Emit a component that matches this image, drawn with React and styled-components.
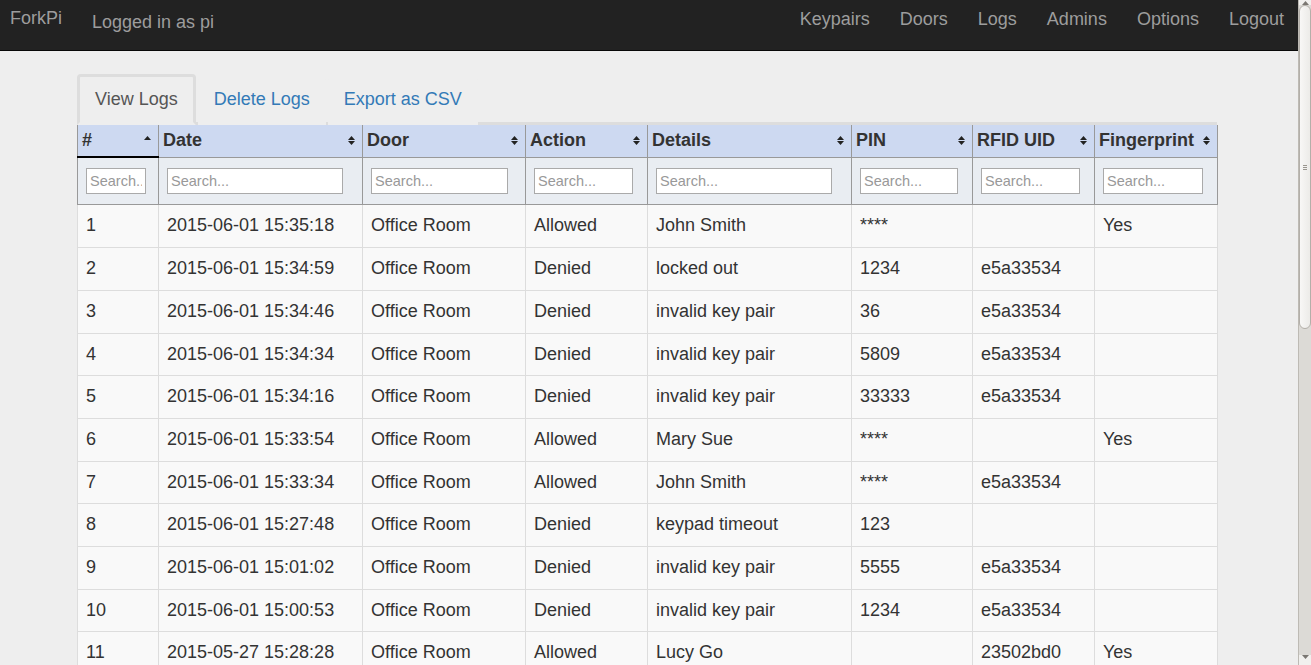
import React from 'react';
import styled, { createGlobalStyle } from 'styled-components';

const GlobalStyle = createGlobalStyle`
html, body {
margin: 0;
padding: 0;
overflow: hidden;
background: #eeeeee;
}
body {
font-family: "Liberation Sans", Arial, sans-serif;
font-size: 18px;
line-height: 1.42857;
color: #333;
}
`

const navLinks = ['Keypairs', 'Doors', 'Logs', 'Admins', 'Options', 'Logout']
const tabs = ['View Logs', 'Delete Logs', 'Export as CSV']

const columns = [
    { title: '#', width: 81, sorted: true },
    { title: 'Date', width: 204 },
    { title: 'Door', width: 163 },
    { title: 'Action', width: 122 },
    { title: 'Details', width: 204 },
    { title: 'PIN', width: 121 },
    { title: 'RFID UID', width: 122 },
    { title: 'Fingerprint', width: 123 },
]

const logs = [
    [1, '2015-06-01 15:35:18', 'Office Room', 'Allowed', 'John Smith', '****', '', 'Yes'],
    [2, '2015-06-01 15:34:59', 'Office Room', 'Denied', 'locked out', '1234', 'e5a33534', ''],
    [3, '2015-06-01 15:34:46', 'Office Room', 'Denied', 'invalid key pair', '36', 'e5a33534', ''],
    [4, '2015-06-01 15:34:34', 'Office Room', 'Denied', 'invalid key pair', '5809', 'e5a33534', ''],
    [5, '2015-06-01 15:34:16', 'Office Room', 'Denied', 'invalid key pair', '33333', 'e5a33534', ''],
    [6, '2015-06-01 15:33:54', 'Office Room', 'Allowed', 'Mary Sue', '****', '', 'Yes'],
    [7, '2015-06-01 15:33:34', 'Office Room', 'Allowed', 'John Smith', '****', 'e5a33534', ''],
    [8, '2015-06-01 15:27:48', 'Office Room', 'Denied', 'keypad timeout', '123', '', ''],
    [9, '2015-06-01 15:01:02', 'Office Room', 'Denied', 'invalid key pair', '5555', 'e5a33534', ''],
    [10, '2015-06-01 15:00:53', 'Office Room', 'Denied', 'invalid key pair', '1234', 'e5a33534', ''],
    [11, '2015-05-27 15:28:28', 'Office Room', 'Allowed', 'Lucy Go', '', '23502bd0', 'Yes'],
]

function SortIcon({ onlyUp }) {
    return (
        <svg width="7" height="9" viewBox="0 0 7 9">
            <polygon points="0,4 3.5,0 7,4" fill="#222" />
            {onlyUp ? null : <polygon points="0,5 7,5 3.5,9" fill="#222" />}
        </svg>
    )
}

export default function App() {
    return (
        <Frame>
            <GlobalStyle />
            <Page>
                <Navbar>
                    <Brand>ForkPi</Brand>
                    <NavText>Logged in as pi</NavText>
                    <NavLinks>
                        {navLinks.map(l => <NavLink key={l}>{l}</NavLink>)}
                    </NavLinks>
                </Navbar>
                <Container>
                    <Tabs>
                        {tabs.map((t, i) => <Tab key={t} $active={i === 0}>{t}</Tab>)}
                    </Tabs>
                    <Table>
                        <colgroup>
                            {columns.map(c => <col key={c.title} style={{ width: c.width }} />)}
                        </colgroup>
                        <thead>
                            <tr>
                                {columns.map(c =>
                                    <Th key={c.title} $sorted={c.sorted}>
                                        <ThInner>
                                            <span>{c.title}</span>
                                            <SortIcon onlyUp={c.sorted} />
                                        </ThInner>
                                    </Th>)}
                            </tr>
                            <tr>
                                {columns.map(c =>
                                    <FilterCell key={c.title}>
                                        <SearchInput placeholder="Search..." />
                                    </FilterCell>)}
                            </tr>
                        </thead>
                        <tbody>
                            {logs.map(row =>
                                <tr key={row[0]}>
                                    {row.map((v, i) => <Td key={i}>{v}</Td>)}
                                </tr>)}
                        </tbody>
                    </Table>
                </Container>
            </Page>
            <Scrollbar>
                <ScrollArrow>
                    <svg width="7" height="4" viewBox="0 0 7 4"><polygon points="0,4 3.5,0 7,4" fill="#7a7772" /></svg>
                </ScrollArrow>
                <Thumb>
                    <Grip /><Grip /><Grip />
                </Thumb>
                <Track />
                <ScrollArrow $bottom>
                    <svg width="7" height="4" viewBox="0 0 7 4"><polygon points="0,0 7,0 3.5,4" fill="#7a7772" /></svg>
                </ScrollArrow>
            </Scrollbar>
        </Frame>
    )
}

const Frame = styled.div`
display: flex;
height: 665px;
width: 100%;
overflow: hidden;
`
const Page = styled.div`
flex: 1;
min-width: 0;
height: 665px;
overflow: hidden;
`
const Navbar = styled.div`
display: flex;
align-items: flex-start;
height: 50px;
background-color: #222;
border-bottom: 1px solid #080808;
padding: 0 14px 0 10px;
color: #9d9d9d;
`
const Brand = styled.div`
padding-top: 6px;
font-size: 18px;
`
const NavText = styled.div`
padding-top: 10px;
margin-left: 30px;
`
const NavLinks = styled.div`
margin-left: auto;
display: flex;
gap: 30px;
`
const NavLink = styled.div`
padding-top: 7px;
color: #9d9d9d;
`
const Container = styled.div`
width: 1140px;
padding-right: 4px;
margin: 23px auto 0;
`
const Tabs = styled.div`
display: flex;
align-items: flex-end;
border-bottom: 3px solid #ddd;
`
const Tab = styled.div`
margin-bottom: -3px;
margin-right: 2px;
background-color: #eee;
color: ${props => props.$active ? '#555' : '#337ab7'};
border: ${props => props.$active ? '3px solid #ddd' : '1px solid transparent'};
border-bottom-color: transparent;
border-radius: 4px 4px 0 0;
padding: ${props => props.$active ? '10px 15px 9px' : '9px 15px 11px'};
`
const Table = styled.table`
width: 1140px;
table-layout: fixed;
border-collapse: collapse;
`
const Th = styled.th`
background-color: #cdd9f1;
border: 1px solid #999;
border-top: 0;
border-bottom: ${props => props.$sorted ? '2px solid #000' : '1px solid #999'};
padding: 3px 7px 3px 4px;
text-align: left;
font-weight: bold;
white-space: nowrap;
`
const ThInner = styled.div`
display: flex;
justify-content: space-between;
align-items: center;
gap: 4px;
`
const FilterCell = styled.td`
background-color: #e9edf2;
border: 1px solid #999;
padding: 10px 8px 10px;
`
const SearchInput = styled.input`
display: block;
box-sizing: border-box;
width: 94%;
height: 26px;
margin: 0;
padding: 2px 3px;
border: 1px solid #aaa;
background: #fff;
font-family: "Liberation Sans", Arial, sans-serif;
font-size: 14.5px;
color: #333;
&::placeholder { color: #999; }
`
const Td = styled.td`
background-color: #f9f9f9;
border: 1px solid #ddd;
padding: 8px;
white-space: nowrap;
`
const Scrollbar = styled.div`
width: 12px;
flex-shrink: 0;
height: 665px;
display: flex;
flex-direction: column;
background-color: #dcdad6;
border-left: 1px solid #bdbab4;
`
const ScrollArrow = styled.div`
height: ${props => props.$bottom ? '10px' : '5px'};
display: flex;
align-items: ${props => props.$bottom ? 'flex-start' : 'flex-end'};
justify-content: center;
background-color: #f1f0ee;
overflow: hidden;
`
const Thumb = styled.div`
height: 324px;
box-sizing: border-box;
border: 1px solid #b3afa9;
border-radius: 6px;
background: linear-gradient(to right, #f8f7f6, #ecebe8);
display: flex;
flex-direction: column;
align-items: center;
justify-content: center;
gap: 1px;
`
const Grip = styled.div`
width: 4px;
height: 1px;
background-color: #9a968f;
`
const Track = styled.div`
flex: 1;
`
